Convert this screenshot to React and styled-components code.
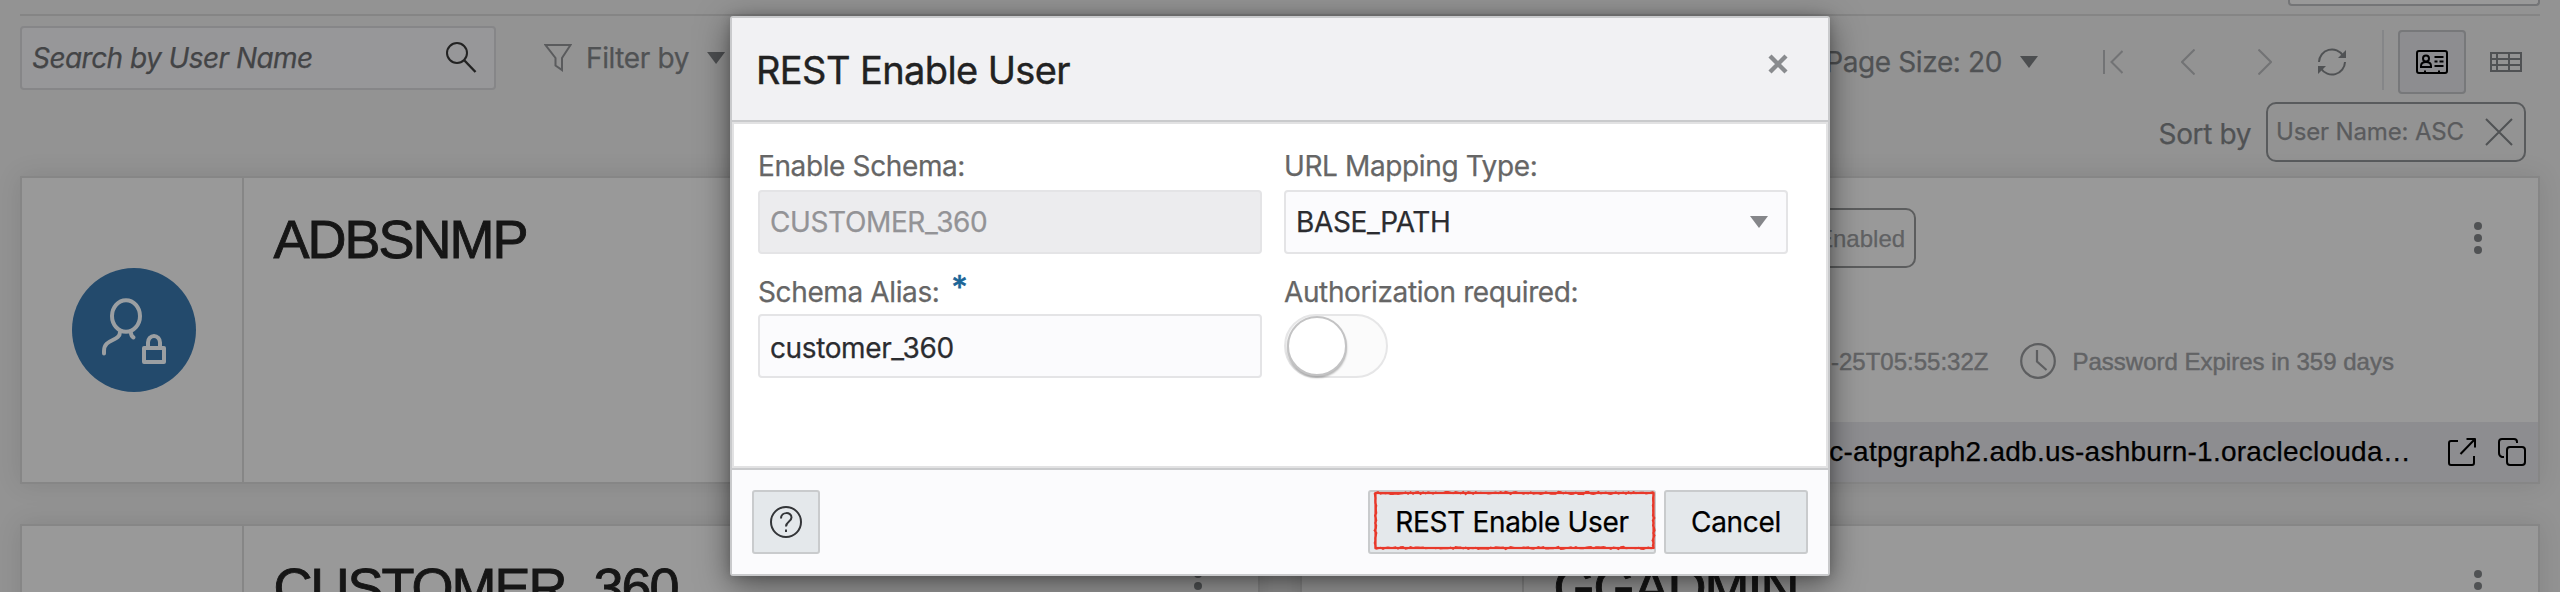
import React from "react";
import styled, { createGlobalStyle } from "styled-components";

const GlobalStyle = createGlobalStyle`
  *, *::before, *::after { box-sizing: border-box; }
  body { margin: 0; background: #939393; }
`;

const ui = `"Inter", "Liberation Sans", sans-serif`;
const helvetica = `"Liberation Sans", Arial, sans-serif`;

/* ---------- page ---------- */

const Page = styled.div`
  position: relative;
  display: flex;
  flex-direction: column;
  height: 592px;
  padding: 0 20px;
  overflow: hidden;
  background: #939393;
  font: 400 28px/34px ${ui};
  letter-spacing: -0.38px;
  color: #505254;
  white-space: nowrap;
  -webkit-text-stroke: 0.25px currentColor;
`;

const TopStrip = styled.div`
  display: flex;
  justify-content: flex-end;
  flex: none;
  height: 16px;
  border-bottom: 2px solid #858585;
`;

const TopPanel = styled.div`
  width: 252px;
  height: 6px;
  border: 2px solid #747577;
  border-top: 0;
  border-radius: 0 0 4px 4px;
  background: #999;
`;

const Toolbar = styled.div`
  display: flex;
  flex: none;
  height: 78px;
  justify-content: space-between;
`;

const ToolGroup = styled.div`
  display: flex;
  align-items: center;
  height: 64px;
  margin-top: ${(p) => p.$top}px;
`;

const SearchBox = styled.div`
  display: flex;
  align-items: center;
  justify-content: space-between;
  width: 476px;
  height: 64px;
  margin-right: 48px;
  padding: 0 17px 0 10px;
  border: 2px solid #868688;
  border-radius: 4px;
  background: #979799;
  font-style: italic;
  letter-spacing: -0.55px;
  color: #434446;
`;

const MenuText = styled.span`
  margin: 0 ${(p) => p.$right}px 0 ${(p) => p.$left || 0}px;
`;

const Caret = styled.span`
  width: 18px;
  height: 12px;
  background: ${(p) => p.$color || "#4c4e50"};
  clip-path: polygon(0 0, 100% 0, 50% 100%);
`;

const NavIcon = styled.svg`
  flex: none;
  margin-left: ${(p) => p.$gap}px;
  fill: none;
  stroke: ${(p) => p.$color || "#727375"};
  stroke-width: 2;
`;

const Divider = styled.span`
  width: 2px;
  height: 60px;
  margin: 0 14px 4px 36px;
  background: #858688;
`;

const ViewButton = styled.span`
  display: flex;
  align-items: center;
  justify-content: center;
  width: 68px;
  height: 64px;
  margin-right: ${(p) => (p.$active ? 6 : 0)}px;
  border: 2px solid ${(p) => (p.$active ? "#77787a" : "transparent")};
  border-radius: 4px;
  background: ${(p) => (p.$active ? "#8d8d90" : "transparent")};
`;

const SortRow = styled.div`
  display: flex;
  justify-content: flex-end;
  align-items: center;
  flex: none;
  height: 60px;
  margin: 8px 14px 14px 0;
`;

const SortLabel = styled.span`
  padding-top: 4px;
  margin-right: 15px;
`;

const SortChip = styled.span`
  display: flex;
  align-items: center;
  justify-content: space-between;
  width: 260px;
  height: 60px;
  padding: 0 11px 1px 8px;
  border: 2px solid #595b5d;
  border-radius: 10px;
  font-size: 24px;
  letter-spacing: -0.15px;
  color: #5a5b5d;
`;

/* ---------- cards ---------- */

const CardGrid = styled.div`
  display: grid;
  grid-template-columns: 1fr 1fr;
  grid-auto-rows: 308px;
  gap: 40px;
`;

const CardBox = styled.div`
  display: flex;
  border: 2px solid #868686;
  background: #999;
  box-shadow: 0 0 24px rgba(0, 0, 0, 0.1);
`;

const AvatarPane = styled.div`
  display: flex;
  align-items: center;
  justify-content: center;
  width: 222px;
  border-right: 2px solid #868686;
  padding-left: 4px;
`;

const Avatar = styled.div`
  width: 124px;
  height: 124px;
  border-radius: 50%;
  background: #234a6c;

  svg {
    display: block;
    fill: none;
    stroke: #9b9fa2;
    stroke-width: 4;
    stroke-linecap: round;
    stroke-linejoin: round;
  }
`;

const CardBody = styled.div`
  display: flex;
  flex: 1;
  flex-direction: column;
  min-width: 0;
  font-family: ${helvetica};
  letter-spacing: 0;
`;

const CardHead = styled.div`
  display: flex;
  align-items: flex-start;
  height: 165px;
`;

const CardTitle = styled.div`
  margin: 31px 0 0 29.5px;
  font-size: 54px;
  line-height: 60px;
  letter-spacing: -2px;
  color: #161616;
  -webkit-text-stroke: 0.9px currentColor;
`;

const StatusChip = styled.span`
  width: 112px;
  height: 60px;
  margin: 30px 0 0 280px;
  padding-left: 11px;
  border: 2px solid #5c5d5e;
  border-radius: 10px;
  font-size: 24px;
  line-height: 57px;
  color: #606163;
`;

const Kebab = styled.svg`
  margin: 44px 56px 0 auto;
  fill: #505254;
`;

const Details = styled.div`
  display: flex;
  align-items: center;
  height: 36px;
  padding-left: 307px;
  font-size: 24px;
  color: #626365;
  -webkit-text-stroke: 0.45px currentColor;

  svg {
    margin: 0 16px 0 32px;
    fill: none;
    stroke: #5d5e60;
    stroke-width: 2.2;
  }
`;

const DetailText = styled.span`
  padding-top: 2px;
`;

const LinkBar = styled.div`
  display: flex;
  align-items: center;
  justify-content: flex-end;
  height: 60px;
  margin-top: auto;
  padding-right: 12px;
  background: #8d8d90;
  letter-spacing: 0.25px;
  color: #000;

  svg {
    margin-left: 22px;
    fill: none;
    stroke: #000;
    stroke-width: 2;
    stroke-linejoin: round;
  }
`;

const LinkText = styled.span`
  margin-right: 15px;
`;

/* ---------- dialog ---------- */

const DialogLayer = styled.div`
  position: absolute;
  inset: 0;
  display: flex;
  justify-content: center;
  align-items: flex-start;
  padding-top: 16px;
`;

const Dialog = styled.div`
  display: flex;
  flex-direction: column;
  width: 1100px;
  height: 560px;
  border: 2px solid #c9cacc;
  border-radius: 3px;
  background: #fff;
  box-shadow: 0 8px 32px rgba(0, 0, 0, 0.5), 0 0 10px rgba(0, 0, 0, 0.15);
`;

const DialogHeader = styled.div`
  display: flex;
  align-items: center;
  justify-content: space-between;
  height: 104px;
  padding: 0 40px 0 24px;
  border-bottom: 2px solid #c9cacc;
  background: #f1f1f3;
`;

const DialogTitle = styled.h1`
  margin: 0;
  padding-top: 2px;
  font: 400 38px/46px ${ui};
  letter-spacing: -0.6px;
  color: #222;
  -webkit-text-stroke: 0.4px currentColor;
`;

const CloseIcon = styled.svg`
  margin-bottom: 11px;
  stroke: #898b8e;
  stroke-width: 4.4;
`;

const DialogBody = styled.div`
  display: grid;
  grid-template-columns: 504px 504px;
  grid-template-rows: 124px 124px;
  column-gap: 22px;
  height: 346px;
  padding: 6px 24px 0;
  border: 2px solid #e2e2e3;
`;

const Field = styled.div`
  display: flex;
  flex-direction: column;
`;

const Label = styled.div`
  display: flex;
  height: 60px;
  padding-top: ${(p) => p.$top}px;
  line-height: 34px;
  color: #666;
`;

const Required = styled.span`
  margin: -4px 0 0 12px;
  font-size: 32px;
  color: #1b6597;
  -webkit-text-stroke: 0.6px currentColor;
`;

const Input = styled.div`
  display: flex;
  flex: none;
  align-items: center;
  justify-content: space-between;
  height: 64px;
  padding: ${(p) => p.$drop || 0}px 18px 0 10px;
  border: 2px solid #e4e4e6;
  border-radius: 4px;
  background: ${(p) => (p.$disabled ? "#ececee" : "#fbfbfd")};
  color: ${(p) => (p.$disabled ? "#939396" : "#2b2c30")};
`;

const Switch = styled.div`
  width: 104px;
  height: 64px;
  padding: 0 1px;
  border: 2px solid #e6e6e7;
  border-radius: 32px;
  background: #fbfbfb;
`;

const Knob = styled.div`
  width: 60px;
  height: 60px;
  border: 2px solid #c3c3c4;
  border-radius: 50%;
  background: #fff;
  box-shadow: 0 2px 2px rgba(0, 0, 0, 0.28);
`;

const DialogFooter = styled.div`
  display: flex;
  align-items: center;
  flex: 1;
  padding: 0 20px;
  border-top: 2px solid #c9cacc;
  background: #fbfbfd;
`;

const Button = styled.button`
  position: relative;
  display: flex;
  align-items: center;
  justify-content: center;
  width: ${(p) => p.$width}px;
  height: 64px;
  margin: 0;
  margin-left: ${(p) => (p.$push ? "auto" : `${p.$gap || 0}px`)};
  padding: 0;
  border: 2px solid #c9cbcd;
  border-radius: 3px;
  background: #e4e8eb;
  font: inherit;
  letter-spacing: -0.3px;
  color: #000;
`;

const Marker = styled.svg`
  position: absolute;
  left: 1px;
  top: -3px;
  fill: none;
  stroke: #e8392b;
`;

/* Hand-drawn looking edge: a line whose points wobble across its direction. */
function roughEdge(x1, y1, x2, y2, seed) {
  const length = Math.hypot(x2 - x1, y2 - y1);
  const steps = Math.round(length / 2.5);
  const ux = (x2 - x1) / length;
  const uy = (y2 - y1) / length;
  let d = `M${x1} ${y1}`;
  for (let i = 1; i <= steps; i += 1) {
    const h = Math.sin(i * 127.1 + seed * 311.7) * 43758.5453;
    const n = (h - Math.floor(h) - 0.5) * 2.6;
    const t = (length * i) / steps;
    d += `L${(x1 + ux * t - uy * n).toFixed(1)} ${(y1 + uy * t + ux * n).toFixed(1)}`;
  }
  return d;
}

const markerPath = [
  roughEdge(4.5, 4, 282.5, 4, 1),
  roughEdge(282.5, 4, 282.5, 59, 2),
  roughEdge(282.5, 59, 4.5, 59, 3),
  roughEdge(4.5, 59, 4.5, 4, 4),
].join("");

function RedMarker() {
  return (
    <Marker width="288" height="68">
      <rect x="4.500" y="4" width="278" height="55" strokeWidth="2.200" />
      <path d={markerPath} strokeWidth="1.600" />
    </Marker>
  );
}

function KebabMenu() {
  return (
    <Kebab width="8" height="32">
      <circle cx="4" cy="4" r="4" />
      <circle cx="4" cy="16" r="4" />
      <circle cx="4" cy="28" r="4" />
    </Kebab>
  );
}

function LockedUser() {
  return (
    <Avatar>
      <svg width="124" height="124">
        <ellipse cx="54" cy="48" rx="14" ry="15.8" />
        <path d="M48 64C48 74 32 70 32 83V85.500M59 65C59 67 60 68.500 61.500 69.500" />
        <rect x="72" y="80" width="20" height="14" />
        <path d="M76 80V74.500a6 6.500 0 0 1 12 0V80" />
      </svg>
    </Avatar>
  );
}

function UserCard({ title, locked, children }) {
  return (
    <CardBox>
      <AvatarPane>{locked && <LockedUser />}</AvatarPane>
      <CardBody>
        <CardHead>
          {title ? <CardTitle>{title}</CardTitle> : <StatusChip>Enabled</StatusChip>}
          <KebabMenu />
        </CardHead>
        {children}
      </CardBody>
    </CardBox>
  );
}

export default function App() {
  return (
    <Page>
      <GlobalStyle />
      <TopStrip>
        <TopPanel />
      </TopStrip>

      <Toolbar>
        <ToolGroup $top={10}>
          <SearchBox>
            Search by User Name
            <svg width="32" height="32" fill="none" stroke="#222" strokeWidth="2">
              <circle cx="12" cy="11" r="10" />
              <path d="M19 18L30.500 30" strokeWidth="2.400" />
            </svg>
          </SearchBox>
          <NavIcon $gap={0} $color="#5a5b5d" width="28" height="28">
            <path d="M1.500 1H26.500L18 14V26L11.500 21.500V14Z" />
          </NavIcon>
          <MenuText $left={14} $right={18}>Filter by</MenuText>
          <Caret />
        </ToolGroup>

        <ToolGroup $top={14}>
          <MenuText $right={18}>Page Size: 20</MenuText>
          <Caret />
          <NavIcon $gap={65} width="20" height="26">
            <path d="M1 1V25M19.500 2L8.500 13L19.500 24" />
          </NavIcon>
          <NavIcon $gap={58} width="14" height="26">
            <path d="M13.500 0.500L1 13L13.500 25.500" />
          </NavIcon>
          <NavIcon $gap={63} width="14" height="26">
            <path d="M0.500 0.500L13 13L0.500 25.500" />
          </NavIcon>
          <NavIcon $gap={46} $color="#505254" width="28" height="30">
            <path d="M1 15A13 13 0 0 1 25 8.500M27 15A13 13 0 0 1 3 21.500" />
            <path d="M28 3V11H20ZM0 27V19H8Z" fill="#505254" stroke="none" />
          </NavIcon>
          <Divider />
          <ViewButton $active>
            <svg width="32" height="24" fill="none" stroke="#000" strokeWidth="2">
              <rect x="1" y="1" width="30" height="22" rx="2" />
              <circle cx="10" cy="8.500" r="3" />
              <path d="M5 17V16C5 13.500 7 12 10 12S15 13.500 15 16V17ZM18.500 7H27.500M18.500 11.500H21.500M23.500 11.500H27.500M18.500 16H27.500M9 20.500V23M23 20.500V23" />
            </svg>
          </ViewButton>
          <ViewButton>
            <svg width="32" height="20" fill="none" stroke="#505254" strokeWidth="2">
              <path d="M1 1H31V19H1ZM1 7H31M1 13H31M7 1V19M19 1V19" />
            </svg>
          </ViewButton>
        </ToolGroup>
      </Toolbar>

      <SortRow>
        <SortLabel>Sort by</SortLabel>
        <SortChip>
          User Name: ASC
          <svg width="28" height="28" stroke="#505254" strokeWidth="2">
            <path d="M1 1L27 27M27 1L1 27" />
          </svg>
        </SortChip>
      </SortRow>

      <CardGrid>
        <UserCard title="ADBSNMP" locked />
        <UserCard>
          <Details>
            <DetailText>-25T05:55:32Z</DetailText>
            <svg width="36" height="36">
              <circle cx="18" cy="18" r="16.800" />
              <path d="M17 7V18.500L26.500 27" />
            </svg>
            <DetailText>Password Expires in 359 days</DetailText>
          </Details>
          <LinkBar>
            <LinkText>c-atpgraph2.adb.us-ashburn-1.oracleclouda…</LinkText>
            <svg width="28" height="28">
              <path d="M10 3H3Q1 3 1 5V25Q1 27 3 27H24Q26 27 26 25V18M12.500 16L27 1M18.500 1H27V9.500" />
            </svg>
            <svg width="28" height="28">
              <rect x="9" y="9" width="18" height="18" rx="3" />
              <path d="M6 19H4Q1 18 1 15V4Q1 1 4 1H16Q19 1 19 4V5" />
            </svg>
          </LinkBar>
        </UserCard>
        <UserCard title="CUSTOMER_360" />
        <UserCard title="GGADMIN" />
      </CardGrid>

      <DialogLayer>
        <Dialog role="dialog">
          <DialogHeader>
            <DialogTitle>REST Enable User</DialogTitle>
            <CloseIcon width="20" height="20">
              <path d="M2 2L18 18M18 2L2 18" />
            </CloseIcon>
          </DialogHeader>

          <DialogBody>
            <Field>
              <Label $top={19}>Enable Schema:</Label>
              <Input $disabled>CUSTOMER_360</Input>
            </Field>
            <Field>
              <Label $top={19}>URL Mapping Type:</Label>
              <Input>
                BASE_PATH
                <Caret $color="#85868a" />
              </Input>
            </Field>
            <Field>
              <Label $top={21}>
                Schema Alias:<Required>*</Required>
              </Label>
              <Input $drop={3}>customer_360</Input>
            </Field>
            <Field>
              <Label $top={21}>Authorization required:</Label>
              <Switch>
                <Knob />
              </Switch>
            </Field>
          </DialogBody>

          <DialogFooter>
            <Button $width={68}>
              <svg width="34" height="34" fill="none" stroke="#333538" strokeWidth="2">
                <circle cx="17" cy="17" r="15" />
                <path d="M12 13.500C12 6.500 22.500 6.500 22.500 12.500C22.500 16.500 17 16.500 17 21.500M17 24.500V27" />
              </svg>
            </Button>
            <Button $width={288} $push>
              REST Enable User
              <RedMarker />
            </Button>
            <Button $width={144} $gap={8}>Cancel</Button>
          </DialogFooter>
        </Dialog>
      </DialogLayer>
    </Page>
  );
}
